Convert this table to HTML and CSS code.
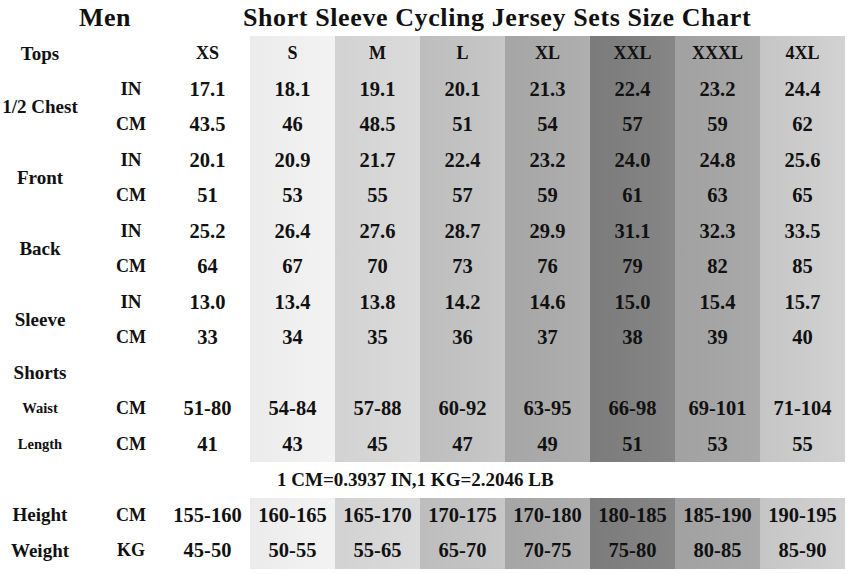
FILE: index.html
```html
<!DOCTYPE html>
<html>
<head>
<meta charset="utf-8">
<link rel="stylesheet" href="styles.css">
</head>
<body>
<div class="head">
  <div class="men">Men</div>
  <div class="title">Short Sleeve Cycling Jersey Sets Size Chart</div>
</div>
<div class="chart">
  <div class="lab">Tops</div><div class="unit"></div>
  <div class="hd s1">XS</div><div class="hd s2">S</div><div class="hd s3">M</div><div class="hd s4">L</div><div class="hd s5">XL</div><div class="hd s6">XXL</div><div class="hd s7">XXXL</div><div class="hd s8">4XL</div>

  <div class="lab span2">1/2 Chest</div><div class="unit">IN</div>
  <div class="v s1">17.1</div><div class="v s2">18.1</div><div class="v s3">19.1</div><div class="v s4">20.1</div><div class="v s5">21.3</div><div class="v s6">22.4</div><div class="v s7">23.2</div><div class="v s8">24.4</div>
  <div class="unit cm">CM</div>
  <div class="v s1">43.5</div><div class="v s2">46</div><div class="v s3">48.5</div><div class="v s4">51</div><div class="v s5">54</div><div class="v s6">57</div><div class="v s7">59</div><div class="v s8">62</div>

  <div class="lab span2">Front</div><div class="unit">IN</div>
  <div class="v s1">20.1</div><div class="v s2">20.9</div><div class="v s3">21.7</div><div class="v s4">22.4</div><div class="v s5">23.2</div><div class="v s6">24.0</div><div class="v s7">24.8</div><div class="v s8">25.6</div>
  <div class="unit cm">CM</div>
  <div class="v s1">51</div><div class="v s2">53</div><div class="v s3">55</div><div class="v s4">57</div><div class="v s5">59</div><div class="v s6">61</div><div class="v s7">63</div><div class="v s8">65</div>

  <div class="lab span2">Back</div><div class="unit">IN</div>
  <div class="v s1">25.2</div><div class="v s2">26.4</div><div class="v s3">27.6</div><div class="v s4">28.7</div><div class="v s5">29.9</div><div class="v s6">31.1</div><div class="v s7">32.3</div><div class="v s8">33.5</div>
  <div class="unit cm">CM</div>
  <div class="v s1">64</div><div class="v s2">67</div><div class="v s3">70</div><div class="v s4">73</div><div class="v s5">76</div><div class="v s6">79</div><div class="v s7">82</div><div class="v s8">85</div>

  <div class="lab span2">Sleeve</div><div class="unit">IN</div>
  <div class="v s1">13.0</div><div class="v s2">13.4</div><div class="v s3">13.8</div><div class="v s4">14.2</div><div class="v s5">14.6</div><div class="v s6">15.0</div><div class="v s7">15.4</div><div class="v s8">15.7</div>
  <div class="unit cm">CM</div>
  <div class="v s1">33</div><div class="v s2">34</div><div class="v s3">35</div><div class="v s4">36</div><div class="v s5">37</div><div class="v s6">38</div><div class="v s7">39</div><div class="v s8">40</div>

  <div class="lab">Shorts</div><div class="unit"></div>
  <div class="v s1"></div><div class="v s2"></div><div class="v s3"></div><div class="v s4"></div><div class="v s5"></div><div class="v s6"></div><div class="v s7"></div><div class="v s8"></div>

  <div class="lab small">Waist</div><div class="unit cm">CM</div>
  <div class="v s1">51-80</div><div class="v s2">54-84</div><div class="v s3">57-88</div><div class="v s4">60-92</div><div class="v s5">63-95</div><div class="v s6">66-98</div><div class="v s7">69-101</div><div class="v s8">71-104</div>

  <div class="lab small">Length</div><div class="unit cm">CM</div>
  <div class="v s1">41</div><div class="v s2">43</div><div class="v s3">45</div><div class="v s4">47</div><div class="v s5">49</div><div class="v s6">51</div><div class="v s7">53</div><div class="v s8">55</div>

  <div class="conv">1 CM=0.3937 IN,1 KG=2.2046 LB</div>

  <div class="lab">Height</div><div class="unit cm">CM</div>
  <div class="v s1">155-160</div><div class="v s2">160-165</div><div class="v s3">165-170</div><div class="v s4">170-175</div><div class="v s5">170-180</div><div class="v s6">180-185</div><div class="v s7">185-190</div><div class="v s8">190-195</div>

  <div class="lab">Weight</div><div class="unit cm">KG</div>
  <div class="v s1">45-50</div><div class="v s2">50-55</div><div class="v s3">55-65</div><div class="v s4">65-70</div><div class="v s5">70-75</div><div class="v s6">75-80</div><div class="v s7">80-85</div><div class="v s8">85-90</div>
</div>
</body>
</html>
```
FILE: styles.css
```css
html, body {
  margin: 0;
  padding: 0;
  background: #ffffff;
}
body {
  font-family: "Liberation Serif", "Times New Roman", serif;
  font-weight: bold;
  color: #111111;
  width: 850px;
  height: 574px;
  overflow: hidden;
}
.head {
  display: flex;
  height: 36px;
  align-items: center;
  font-size: 26px;
}
.men {
  width: 210px;
  text-align: center;
  letter-spacing: 0.5px;
}
.title {
  padding-left: 33px;
  white-space: nowrap;
  letter-spacing: 0.6px;
}
.chart {
  display: grid;
  grid-template-columns: 80px 85px repeat(8, 85px);
  grid-auto-rows: 35.5px;
}
.chart > div {
  display: flex;
  align-items: center;
  justify-content: center;
  white-space: nowrap;
}
.lab {
  font-size: 19px;
}
.lab.small {
  font-size: 14.5px;
}
.span2 {
  grid-row: span 2;
}
.unit {
  font-size: 19px;
  padding-left: 17px;
}
.unit.cm {
  font-size: 18px;
}
.hd {
  font-size: 18px;
}
.v {
  font-size: 20.5px;
}
.conv {
  grid-column: 1 / -1;
  font-size: 19px;
  justify-content: flex-start !important;
  padding-left: 277px;
}
.s2 { background: linear-gradient(to right, #ebebeb, #f3f3f3); }
.s3 { background: linear-gradient(to right, #d2d2d2, #dbdbdb); }
.s4 { background: linear-gradient(to right, #bdbdbd, #c7c7c7); }
.s5 { background: linear-gradient(to right, #a5a5a5, #afafaf); }
.s6 { background: linear-gradient(to right, #7b7b7b, #868686); }
.s7 { background: linear-gradient(to right, #a1a1a1, #a9a9a9); }
.s8 { background: linear-gradient(to right, #c5c5c5, #d2d2d2); }
```
